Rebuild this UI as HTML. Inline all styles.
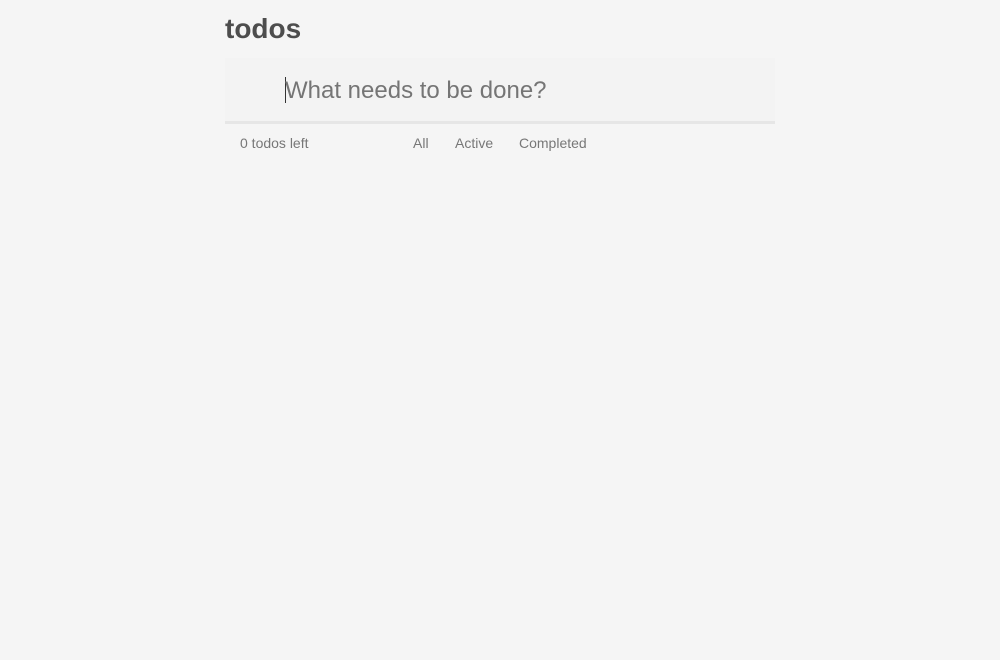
<!DOCTYPE html>
<html><head><style>
body{margin:0;background:#f5f5f5;width:1000px;height:660px;font-family:"Liberation Sans",sans-serif;position:relative;overflow:hidden}
h1{position:absolute;left:225px;top:13px;margin:0;font-size:28px;font-weight:bold;color:#4d4d4d}
.inp{position:absolute;left:225px;top:58px;width:550px;height:63px;background:#f3f3f3;border-bottom:3px solid #e6e6e6}
.inp span{position:absolute;left:60px;top:19px;font-size:24px;color:#757575}
.cur{position:absolute;left:60px;top:19px;width:1px;height:26px;background:#333}
.f{position:absolute;top:135px;font-size:14px;color:#777}
</style></head><body>
<h1>todos</h1>
<div class="inp"><div class="cur"></div><span>What needs to be done?</span></div>
<div class="f" style="left:240px">0 todos left</div>
<div class="f" style="left:413px">All</div>
<div class="f" style="left:455px">Active</div>
<div class="f" style="left:519px">Completed</div>
</body></html>
